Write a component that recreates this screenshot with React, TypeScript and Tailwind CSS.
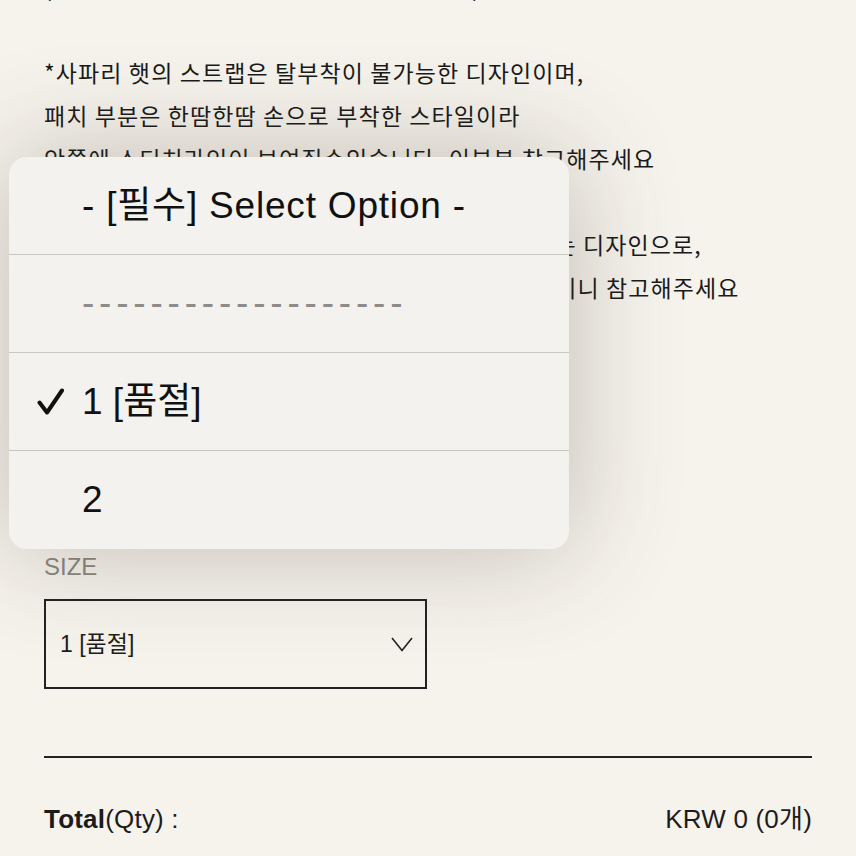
import React from "react";

export default function App() {
  return (
    <div className="relative w-[856px] h-[856px] overflow-hidden bg-[#f6f3ed]">
      {/* page content */}
      <div className="flex flex-col pl-[44px] pr-[44px] -mt-[35px]">
        <div className="flex flex-col text-[23px] leading-[43px] text-[#1a1a1a] tracking-[1.1px] font-['Noto_Sans_CJK_KR',sans-serif]">
          <p className="whitespace-nowrap pt-[1px] h-[43px]">(사이즈조절 스트랩이 포함된 디자인입니다)</p>
          <p className="h-[43px]"></p>
          <p className="whitespace-nowrap">*사파리 햇의 스트랩은 탈부착이 불가능한 디자인이며,</p>
          <p className="whitespace-nowrap">패치 부분은 한땀한땀 손으로 부착한 스타일이라</p>
          <p className="whitespace-nowrap">안쪽에 스티치라인이 보여질수있습니다. 이부분 참고해주세요</p>
          <p className="h-[43px]"></p>
          <p className="whitespace-nowrap">*챙은 와이어가 들어가지 않아 자연스럽게 구부러지는 디자인으로,</p>
          <p className="whitespace-nowrap">형태가 변형될 수 있어서 보관에 주의가 필요한 제품이니 참고해주세요</p>
        </div>

        <div className="mt-[244px] text-[24px] leading-[28px] text-[#8a8780] font-['Liberation_Sans',sans-serif]">
          SIZE
        </div>

        <div className="mt-[18px] w-[383px] h-[90px] border-2 border-[#222] flex items-center justify-between pl-[14px] pr-[12px]">
          <span className="text-[23px] text-[#1e1e1e] font-['Liberation_Sans','Noto_Sans_CJK_KR',sans-serif]">
            1 [품절]
          </span>
          <svg width="22" height="15" viewBox="0 0 22 15" fill="none">
            <polyline points="1,1 11,13.5 21,1" stroke="#222" strokeWidth="1.6" fill="none" />
          </svg>
        </div>

        <div className="mt-[67px] h-[2px] w-full bg-[#222]"></div>

        <div className="mt-[46px] flex items-center justify-between text-[26px] leading-[30px] tracking-[0.2px] text-[#1c1c1c] font-['Liberation_Sans','Noto_Sans_CJK_KR',sans-serif]">
          <span>
            <span className="font-bold">Total</span>(Qty) :
          </span>
          <span>KRW 0 (0개)</span>
        </div>
      </div>

      {/* native select picker popup */}
      <div className="absolute left-[9px] top-[157px] w-[560px] h-[392px] rounded-[18px] bg-[#f4f2ee] shadow-[0_0_110px_rgba(70,60,40,0.3)] flex flex-col overflow-hidden font-['Liberation_Sans','Noto_Sans_CJK_KR',sans-serif] text-[37px] text-[#111]">
        <div className="h-[97px] flex items-center pl-[73px] whitespace-nowrap tracking-[0.8px]">
          - [필수] Select Option -
        </div>
        <div className="h-px bg-[#c9c7c2]"></div>
        <div className="h-[97px] flex items-center pl-[73px] text-[#8e8c88] tracking-[4.8px] whitespace-nowrap">
          -------------------
        </div>
        <div className="h-px bg-[#c9c7c2]"></div>
        <div className="h-[98px] flex items-center pl-[28px] whitespace-nowrap">
          <svg width="27" height="27" viewBox="0 0 27 27" fill="none" className="mr-[18px]">
            <path d="M2.5 14.5 L10 24.5 L25 2.5" stroke="#111" strokeWidth="4" strokeLinecap="round" strokeLinejoin="round" fill="none" />
          </svg>
          <span>1 [품절]</span>
        </div>
        <div className="h-px bg-[#c9c7c2]"></div>
        <div className="h-[98px] flex items-center pl-[73px]">2</div>
      </div>
    </div>
  );
}
